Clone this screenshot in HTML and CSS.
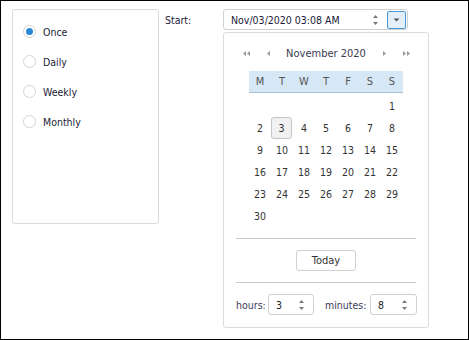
FILE: index.html
```html
<!DOCTYPE html>
<html lang="en">
<head>
    <meta charset="UTF-8">
    <meta name="viewport" content="width=device-width, initial-scale=1.0">
    <title>Schedule</title>
    <link rel="stylesheet" href="styles.css">
</head>
<body>
<div class="frame">
    <div class="options">
        <label class="option"><span class="radio checked"></span>Once</label>
        <label class="option"><span class="radio"></span>Daily</label>
        <label class="option"><span class="radio"></span>Weekly</label>
        <label class="option"><span class="radio"></span>Monthly</label>
    </div>
    <div class="start">
        <div class="start-row">
            <span class="start-label">Start:</span>
            <div class="datetime">
                <span class="datetime-text">Nov/03/2020 03:08 AM</span>
                <svg class="spin" width="7" height="12" viewBox="0 0 7 12"><path d="M3.5 1 L6 4 L1 4 Z M1 8 L6 8 L3.5 11 Z" fill="#7a7a7a"/></svg>
                <span class="drop-btn"><svg width="7" height="4" viewBox="0 0 7 4"><path d="M0.5 0.5 L6.5 0.5 L3.5 3.5 Z" fill="#555"/></svg></span>
            </div>
        </div>
        <div class="popup">
            <div class="nav">
                <span class="nav-btn"><svg width="7" height="5" viewBox="0 0 7 5"><path d="M3 0 L3 5 L0 2.5 Z M7 0 L7 5 L4 2.5 Z" fill="#999"/></svg></span>
                <span class="nav-btn"><svg width="3" height="5" viewBox="0 0 3 5"><path d="M3 0 L3 5 L0 2.5 Z" fill="#999"/></svg></span>
                <span class="nav-title">November 2020</span>
                <span class="nav-btn"><svg width="3" height="5" viewBox="0 0 3 5"><path d="M0 0 L0 5 L3 2.5 Z" fill="#999"/></svg></span>
                <span class="nav-btn"><svg width="7" height="5" viewBox="0 0 7 5"><path d="M0 0 L0 5 L3 2.5 Z M4 0 L4 5 L7 2.5 Z" fill="#999"/></svg></span>
            </div>
            <div class="weekdays">
                <span>M</span><span>T</span><span>W</span><span>T</span><span>F</span><span>S</span><span>S</span>
            </div>
            <div class="days">
                <span></span><span></span><span></span><span></span><span></span><span></span><span class="day">1</span>
                <span class="day">2</span><span class="day selected">3</span><span class="day">4</span><span class="day">5</span><span class="day">6</span><span class="day">7</span><span class="day">8</span>
                <span class="day">9</span><span class="day">10</span><span class="day">11</span><span class="day">12</span><span class="day">13</span><span class="day">14</span><span class="day">15</span>
                <span class="day">16</span><span class="day">17</span><span class="day">18</span><span class="day">19</span><span class="day">20</span><span class="day">21</span><span class="day">22</span>
                <span class="day">23</span><span class="day">24</span><span class="day">25</span><span class="day">26</span><span class="day">27</span><span class="day">28</span><span class="day">29</span>
                <span class="day">30</span>
            </div>
            <div class="sep"></div>
            <div class="today-row"><button class="today">Today</button></div>
            <div class="sep"></div>
            <div class="time-row">
                <span class="time-label hours">hours:</span>
                <div class="num hours-input">
                    <span>3</span>
                    <svg class="spin" width="7" height="12" viewBox="0 0 7 12"><path d="M3.5 1 L6 4 L1 4 Z M1 8 L6 8 L3.5 11 Z" fill="#7a7a7a"/></svg>
                </div>
                <span class="time-label minutes">minutes:</span>
                <div class="num minutes-input">
                    <span>8</span>
                    <svg class="spin" width="7" height="12" viewBox="0 0 7 12"><path d="M3.5 1 L6 4 L1 4 Z M1 8 L6 8 L3.5 11 Z" fill="#7a7a7a"/></svg>
                </div>
            </div>
        </div>
    </div>
</div>
</body>
</html>
```

FILE: styles.css
```css
* {
    box-sizing: border-box;
}
body {
    margin: 0;
    font-family: "DejaVu Sans Condensed", "DejaVu Sans", sans-serif;
    font-size: 10.5px;
    color: #1b1b36;
    background: #fff;
}
.frame {
    width: 469px;
    height: 340px;
    border: 1px solid #000;
    padding: 8px 0 0 11px;
    display: flex;
    gap: 6px;
}
.options {
    width: 147px;
    height: 215px;
    border: 1px solid #dcdcdc;
    border-radius: 3px;
    padding: 15px 0 0 10px;
    display: flex;
    flex-direction: column;
    gap: 17px;
}
.option {
    display: flex;
    align-items: center;
    gap: 7px;
    height: 13px;
}
.radio {
    width: 13px;
    height: 13px;
    border: 1px solid #d4d4d4;
    border-radius: 50%;
    display: flex;
    align-items: center;
    justify-content: center;
}
.radio.checked::after {
    content: "";
    width: 7px;
    height: 7px;
    border-radius: 50%;
    background: #2a87d6;
}
.start-row {
    display: flex;
    align-items: center;
}
.start-label {
    width: 58px;
}
.datetime {
    width: 185px;
    height: 21px;
    border: 1px solid #d0d0d0;
    border-radius: 3px;
    display: flex;
    align-items: center;
    padding-left: 7px;
}
.datetime-text {
    flex: 1;
}
.spin {
    display: block;
}
.datetime .spin {
    margin-right: 8px;
}
.drop-btn {
    width: 19px;
    height: 18px;
    margin-right: 1px;
    border: 1px solid #4a96d4;
    border-radius: 2px;
    background: #e3effa;
    display: flex;
    align-items: center;
    justify-content: center;
}
.popup {
    width: 206px;
    height: 296px;
    margin: 2px 0 0 58px;
    border: 1px solid #dcdcdc;
    border-radius: 3px;
    padding-top: 10px;
}
.nav {
    margin: 0 12px;
    height: 20px;
    display: flex;
    align-items: center;
    gap: 2px;
}
.nav-btn {
    width: 20px;
    display: flex;
    justify-content: center;
}
.nav-title {
    flex: 1;
    text-align: center;
    font-size: 11px;
    color: #3a3a50;
}
.weekdays {
    margin: 8px 0 0 25px;
    width: 154px;
    height: 22px;
    background: #d6e7f5;
    border-bottom: 1px solid #a9c0d6;
    display: grid;
    grid-template-columns: repeat(7, 22px);
    align-items: center;
    text-align: center;
    font-size: 11px;
    color: #555;
}
.days {
    margin: 2px 0 0 25px;
    width: 154px;
    height: 132px;
    display: grid;
    grid-template-columns: repeat(7, 22px);
    grid-auto-rows: 22px;
}
.day {
    display: flex;
    align-items: center;
    justify-content: center;
    color: #333;
}
.day.selected {
    width: 21px;
    border: 1px solid #c4c4c4;
    border-radius: 3px;
    background: #f1f1f1;
}
.sep {
    margin: 11px 12px 0;
    height: 1px;
    background: #c8c8c8;
}
.today-row {
    margin-top: 11px;
    display: flex;
    justify-content: center;
}
.today {
    width: 60px;
    height: 21px;
    border: 1px solid #d0d0d0;
    border-radius: 3px;
    background: #fff;
    font-family: inherit;
    font-size: 11px;
    color: #333;
    padding: 0;
}
.time-row {
    margin-top: 11px;
    padding-left: 12px;
    display: flex;
    align-items: center;
}
.time-label {
    color: #3a3a55;
}
.hours {
    width: 32px;
}
.minutes {
    width: 45px;
}
.num {
    height: 21px;
    border: 1px solid #d0d0d0;
    border-radius: 3px;
    display: flex;
    align-items: center;
    justify-content: space-between;
    padding: 0 8px 0 7px;
    color: #222;
}
.hours-input {
    width: 46px;
    margin-right: 11px;
}
.minutes-input {
    width: 47px;
}
```
